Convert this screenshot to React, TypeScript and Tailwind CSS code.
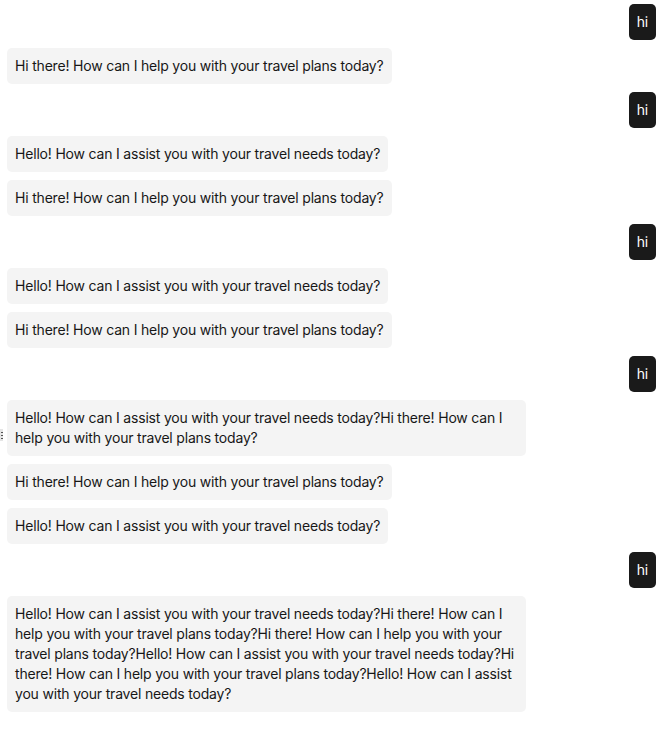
const A1 = 'Hi there! How can I help you with your travel plans today?';
const A2 = 'Hello! How can I assist you with your travel needs today?';

type Msg = { role: 'user' | 'assistant'; text: string; handle?: boolean };

const messages: Msg[] = [
  { role: 'user', text: 'hi' },
  { role: 'assistant', text: A1 },
  { role: 'user', text: 'hi' },
  { role: 'assistant', text: A2 },
  { role: 'assistant', text: A1 },
  { role: 'user', text: 'hi' },
  { role: 'assistant', text: A2 },
  { role: 'assistant', text: A1 },
  { role: 'user', text: 'hi' },
  { role: 'assistant', text: A2 + A1, handle: true },
  { role: 'assistant', text: A1 },
  { role: 'assistant', text: A2 },
  { role: 'user', text: 'hi' },
  { role: 'assistant', text: A2 + A1 + A1 + A2 + A1 + A2 },
];

export default function App() {
  return (
    <div
      className="min-h-screen bg-white pl-[7px] pr-2 pt-1 pb-6 text-[14px] leading-5 tracking-[-0.19px] text-[#171717]"
      style={{ fontFamily: 'Inter, "Noto Sans", sans-serif' }}
    >
      <div className="flex flex-col gap-2">
        {messages.map((m, i) =>
          m.role === 'user' ? (
            <div key={i} className="flex justify-end">
              <div className="rounded-[5px] bg-[#1a1a1a] px-2 py-2 text-white">{m.text}</div>
            </div>
          ) : (
            <div key={i} className="relative flex justify-start">
              {m.handle && (
                <div className="absolute -left-[7px] top-[29px] flex h-3 w-[3px] flex-col items-center justify-center gap-[2px] bg-[#e5e5e5]">
                  <span className="h-[1px] w-[2px] bg-[#555]" />
                  <span className="h-[1px] w-[2px] bg-[#555]" />
                  <span className="h-[1px] w-[2px] bg-[#555]" />
                </div>
              )}
              <div className="max-w-[80%] rounded-[5px] bg-[#f4f4f4] px-2 py-2">{m.text}</div>
            </div>
          )
        )}
      </div>
    </div>
  );
}
